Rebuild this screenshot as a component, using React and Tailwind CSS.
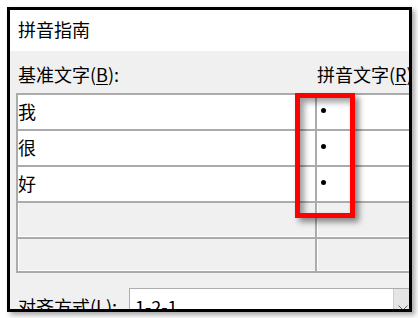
import React from "react";

const rows = ["我", "很", "好"];

function TextRow({ ch }) {
  return (
    <div className="flex h-[36px] shrink-0 border-t-2 border-[#ababab]">
      <div className="flex w-[301px] shrink-0 items-center border-x-2 border-[#ababab] bg-white pb-[1px]">
        <span>{ch}</span>
      </div>
      <div className="flex w-[200px] shrink-0 items-center bg-white">
        <div className="mb-[4px] ml-[4px] h-[5px] w-[5px] rounded-full bg-black" />
      </div>
    </div>
  );
}

function EmptyRow({ last }) {
  return (
    <div className={`flex h-[36px] shrink-0 border-t-2 border-[#ababab] ${last ? "border-b-2" : ""}`}>
      <div className="w-[301px] shrink-0 border-x-2 border-[#ababab] bg-[#f0f0f0]">
        <div className="h-full border-b border-l border-white" />
      </div>
      <div className="w-[200px] shrink-0 bg-[#f0f0f0]">
        <div className="h-full border-b border-l border-white" />
      </div>
    </div>
  );
}

export default function App() {
  return (
    <div className="relative h-[318px] w-[418px] overflow-hidden bg-white pl-[7px] pt-[7px] font-['Noto_Sans_CJK_SC',sans-serif] text-[18px] text-black">
      <div className="h-[305px] w-[405px] overflow-hidden border-[3px] border-black bg-[#f0f0f0] shadow-[3px_3px_5px_rgba(0,0,0,0.35)]">
        <div className="flex h-[41px] items-center bg-white pb-[3px] pl-[8px]">拼音指南</div>

        <div className="pl-[6px]">
          <div className="flex h-[42px] items-center pt-[5px]">
            <div className="w-[301px] shrink-0 whitespace-nowrap pl-[2px]">
              基准文字(<span className="underline underline-offset-2">B</span>):
            </div>
            <div className="shrink-0 whitespace-nowrap">
              拼音文字(<span className="underline underline-offset-2">R</span>)
            </div>
          </div>

          <div className="flex w-[501px] flex-col">
            {rows.map((ch) => (
              <TextRow key={ch} ch={ch} />
            ))}
            <EmptyRow />
            <EmptyRow last />
          </div>

          <div className="mt-[15px] flex h-[36px] items-center">
            <div className="w-[113px] shrink-0 whitespace-nowrap pl-[2px]">
              对齐方式(<span className="underline underline-offset-2">L</span>):
            </div>
            <div className="flex h-[36px] w-[300px] shrink-0 border border-[#adadad] bg-white">
              <div className="flex w-[263px] shrink-0 items-center pl-[5px]">1-2-1</div>
              <div className="flex w-[30px] shrink-0 items-center justify-start border-l border-[#cfcfcf] bg-[#e5e5e5] pl-[4px]">
                <svg width="10" height="6" viewBox="0 0 10 6" className="mt-[4px]">
                  <path d="M0.5 0.5 L5 5 L9.5 0.5" fill="none" stroke="#606060" strokeWidth="1" />
                </svg>
              </div>
            </div>
          </div>
        </div>
      </div>

      <div className="absolute left-[295px] top-[93px] h-[125px] w-[60px] border-[5px] border-[#ff0000] shadow-[4px_4px_6px_rgba(0,0,0,0.45),inset_4px_4px_6px_rgba(0,0,0,0.4)]" />
    </div>
  );
}
